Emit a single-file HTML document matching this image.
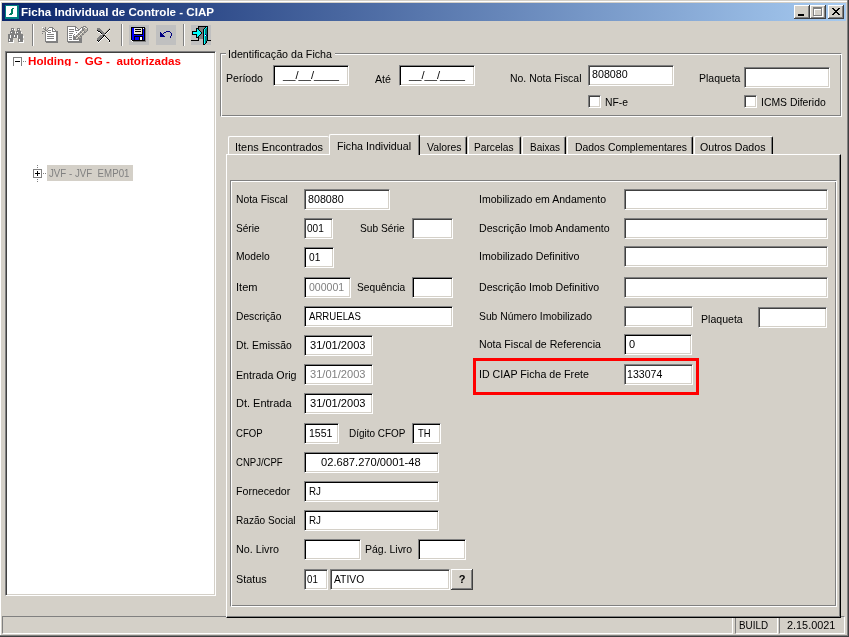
<!DOCTYPE html>
<html><head><meta charset="utf-8">
<style>
*{box-sizing:border-box;margin:0;padding:0}
html,body{width:849px;height:637px;overflow:hidden;background:#d4d0c8}
body{position:relative;font-family:"Liberation Sans",sans-serif;font-size:11px;color:#000;line-height:13px}
.a{position:absolute;white-space:pre}
.l{position:absolute;white-space:pre;height:13px;line-height:13px}
.l span,.inp span,.tab span,.sb span,.t span{display:inline-block;transform-origin:0 0;white-space:pre}
.inp{position:absolute;background:#fff;border:1px solid;border-color:#808080 #fff #fff #808080;box-shadow:inset 1px 1px #404040,inset -1px -1px #d4d0c8;height:21px;white-space:pre;line-height:13px;padding:3px 0 0 4px;overflow:hidden}
.dis{color:#808080}
.bk{box-shadow:inset 1px 1px #000,inset -1px -1px #d4d0c8}
.grp{position:absolute;border:1px solid;border-color:#808080 #fff #fff #808080;box-shadow:inset 1px 1px #fff,inset -1px -1px #808080}
.tab{position:absolute;top:136px;height:18px;border-top:1px solid #fff;border-left:1px solid #fff;border-right:1px solid #000;border-radius:2px 2px 0 0;box-shadow:inset -1px 0 #808080;padding:4px 0 0 6px;white-space:pre;line-height:13px}
.chk{position:absolute;width:13px;height:13px;background:#fff;border:1px solid;border-color:#808080 #fff #fff #808080;box-shadow:inset 1px 1px #404040,inset -1px -1px #d4d0c8}
.sb{position:absolute;top:616px;height:18px;border:1px solid;border-color:#808080 #fff #fff #808080;line-height:13px;padding:2px 0 0 4px;white-space:pre}
.cb{top:5px;width:16px;height:14px;background:#d4d0c8;box-shadow:inset -1px -1px #404040,inset 1px 1px #fff,inset -2px -2px #808080}
.cb svg{display:block}
#s1{transform:scaleX(1.0526)}
#s2{transform:scaleX(1.0563)}
#s3{transform:scaleX(0.8839)}
#s4{transform:scaleX(0.9718)}
#s5{transform:scaleX(0.9603)}
#s6{transform:scaleX(1.0170)}
#s7{transform:scaleX(0.9688)}
#s8{transform:scaleX(1.0170)}
#s9{transform:scaleX(0.9508)}
#s10{transform:scaleX(0.9723)}
#s11{transform:scaleX(0.9406)}
#s12{transform:scaleX(0.9531)}
#s13{transform:scaleX(0.9450)}
#s14{transform:scaleX(0.8949)}
#s15{transform:scaleX(0.9870)}
#s16{transform:scaleX(0.9924)}
#s17{transform:scaleX(0.9681)}
#s18{transform:scaleX(0.9456)}
#s19{transform:scaleX(0.9230)}
#s20{transform:scaleX(0.9082)}
#s21{transform:scaleX(0.9442)}
#s22{transform:scaleX(0.9650)}
#s23{transform:scaleX(0.9395)}
#s24{transform:scaleX(0.9723)}
#s25{transform:scaleX(0.9187)}
#s26{transform:scaleX(0.9151)}
#s27{transform:scaleX(0.9252)}
#s28{transform:scaleX(0.9341)}
#s29{transform:scaleX(0.9224)}
#s30{transform:scaleX(1.0044)}
#s31{transform:scaleX(0.9586)}
#s32{transform:scaleX(0.9269)}
#s33{transform:scaleX(0.9304)}
#s34{transform:scaleX(0.8736)}
#s35{transform:scaleX(0.9410)}
#s36{transform:scaleX(1.0079)}
#s37{transform:scaleX(0.9699)}
#s38{transform:scaleX(1.0079)}
#s39{transform:scaleX(0.9975)}
#s40{transform:scaleX(1.0079)}
#s41{transform:scaleX(0.8703)}
#s42{transform:scaleX(0.9598)}
#s43{transform:scaleX(0.9060)}
#s44{transform:scaleX(0.8588)}
#s45{transform:scaleX(0.8683)}
#s46{transform:scaleX(1.0123)}
#s47{transform:scaleX(0.9651)}
#s48{transform:scaleX(0.8920)}
#s49{transform:scaleX(0.9178)}
#s50{transform:scaleX(0.8920)}
#s51{transform:scaleX(0.9766)}
#s52{transform:scaleX(0.9529)}
#s53{transform:scaleX(0.9844)}
#s54{transform:scaleX(0.8816)}
#s55{transform:scaleX(0.9378)}
#s56{transform:scaleX(0.9579)}
#s57{transform:scaleX(0.9671)}
#s58{transform:scaleX(0.9669)}
#s59{transform:scaleX(0.9630)}
#s60{transform:scaleX(0.9381)}
#s61{transform:scaleX(0.9600)}
#s62{transform:scaleX(0.9632)}
#s64{transform:scaleX(0.9690)}
#s65{transform:scaleX(0.9614)}
</style></head><body>
<div id="w" style="position:absolute;left:0;top:0;width:849px;height:637px;will-change:transform">
<div class="a" style="left:0px;top:1px;width:848px;height:1px;background:#fff"></div>
<div class="a" style="left:0px;top:1px;width:1px;height:634px;background:#fff"></div>
<div class="a" style="left:847px;top:0px;width:1px;height:637px;background:#808080"></div>
<div class="a" style="left:848px;top:0px;width:1px;height:637px;background:#404040"></div>
<div class="a" style="left:0px;top:635px;width:848px;height:1px;background:#808080"></div>
<div class="a" style="left:0px;top:636px;width:849px;height:1px;background:#404040"></div>
<div class="a" style="left:2px;top:3px;width:844px;height:18px;background:linear-gradient(90deg,#0a246a,#a6caf0)"></div>
<div class="a t" style="left:21.4px;top:5px;color:#fff;font-weight:bold;line-height:14px"><span id="s1">Ficha Individual de Controle - CIAP</span></div>
<svg class="a" style="left:5px;top:5px" width="14" height="14" viewBox="0 0 14 14" shape-rendering="crispEdges"><rect width="14" height="14" fill="#008080"/><rect x="1" y="1" width="11" height="11" fill="#fff"/><path d="M7 3h2v1h-1v5h-1v1h-3v-1h1v-1h1v-4h1z" fill="#008060"/></svg>
<div class="a cb" style="left:794px"><svg width="16" height="14" viewBox="0 0 16 14" shape-rendering="crispEdges"><rect x="4" y="9" width="6" height="2" fill="#000"/></svg></div>
<div class="a cb" style="left:810px"><svg width="16" height="14" viewBox="0 0 16 14" shape-rendering="crispEdges"><path d="M4 3h9v9h-9z M5 5v6h7v-6z" fill="#fff" fill-rule="evenodd"/><path d="M3 2h9v9h-9z M4 4v6h7v-6z" fill="#808080" fill-rule="evenodd"/></svg></div>
<div class="a cb" style="left:828px"><svg width="16" height="14" viewBox="0 0 16 14" shape-rendering="crispEdges"><path d="M4 3h2v1h1v1h2v-1h1v-1h2v1h-1v1h-1v1h-1v1h1v1h1v1h1v1h-2v-1h-1v-1h-2v1h-1v1h-2v-1h1v-1h1v-1h1v-1h-1v-1h-1v-1h-1z" fill="#000"/></svg></div>

<svg class="a" style="left:8px;top:28px" width="16" height="15" viewBox="0 0 16 15" shape-rendering="crispEdges"><path fill="#808080" d="M3 0h3v1h-3zM9 0h3v1h-3zM3 1h1v1h-1zM5 1h1v1h-1zM9 1h1v1h-1zM11 1h1v1h-1zM3 2h3v1h-3zM9 2h3v1h-3zM2 3h5v1h-5zM8 3h5v1h-5zM2 4h1v1h-1zM4 4h3v1h-3zM8 4h1v1h-1zM10 4h3v1h-3zM2 5h5v1h-5zM8 5h5v1h-5zM0 6h15v1h-15zM0 7h2v1h-2zM3 7h3v1h-3zM7 7h2v1h-2zM10 7h5v1h-5zM0 8h2v1h-2zM3 8h3v1h-3zM7 8h2v1h-2zM10 8h5v1h-5zM0 9h2v1h-2zM3 9h6v1h-6zM10 9h5v1h-5zM0 10h5v1h-5zM10 10h5v1h-5zM0 11h1v1h-1zM2 11h3v1h-3zM10 11h1v1h-1zM12 11h3v1h-3zM0 12h1v1h-1zM2 12h3v1h-3zM10 12h1v1h-1zM12 12h3v1h-3zM0 13h5v1h-5zM10 13h5v1h-5z"/><path fill="#ffffff" d="M4 1h1v1h-1zM6 1h1v1h-1zM10 1h1v1h-1zM12 1h1v1h-1zM3 4h1v1h-1zM7 4h1v1h-1zM9 4h1v1h-1zM13 4h1v1h-1zM2 7h1v1h-1zM6 7h1v1h-1zM9 7h1v1h-1zM2 8h1v1h-1zM6 8h1v1h-1zM9 8h1v1h-1zM15 8h1v1h-1zM2 9h1v1h-1zM9 9h1v1h-1zM15 9h1v1h-1zM1 11h1v1h-1zM11 11h1v1h-1zM1 12h1v1h-1zM5 12h1v1h-1zM11 12h1v1h-1zM15 12h1v1h-1zM5 13h1v1h-1zM15 13h1v1h-1zM1 14h5v1h-5zM11 14h5v1h-5z"/></svg>
<div class="a" style="left:32px;top:24px;width:1px;height:22px;background:#808080"></div><div class="a" style="left:33px;top:24px;width:1px;height:22px;background:#fff"></div>
<svg class="a" style="left:42px;top:27px" width="16" height="16" viewBox="0 0 16 16" shape-rendering="crispEdges"><path fill="#ffffff" d="M0 0h1v1h-1zM7 1h3v1h-3zM6 2h4v1h-4zM11 2h1v1h-1zM9 3h1v1h-1zM11 3h2v1h-2zM6 4h4v1h-4zM4 5h2v1h-2zM9 5h5v1h-5zM4 6h10v1h-10zM4 7h1v1h-1zM12 7h2v1h-2zM4 8h10v1h-10zM4 9h1v1h-1zM12 9h2v1h-2zM4 10h10v1h-10zM4 11h1v1h-1zM12 11h2v1h-2zM4 12h10v1h-10zM4 13h10v1h-10z"/><path fill="#808080" d="M3 0h1v1h-1zM7 0h4v1h-4zM1 1h1v1h-1zM3 1h1v1h-1zM6 1h1v1h-1zM10 1h2v1h-2zM2 2h2v1h-2zM5 2h1v1h-1zM10 2h1v1h-1zM12 2h1v1h-1zM3 3h2v1h-2zM6 3h3v1h-3zM10 3h1v1h-1zM13 3h1v1h-1zM0 4h3v1h-3zM5 4h1v1h-1zM10 4h6v1h-6zM3 5h1v1h-1zM6 5h3v1h-3zM14 5h2v1h-2zM0 6h1v1h-1zM3 6h1v1h-1zM14 6h2v1h-2zM3 7h1v1h-1zM5 7h7v1h-7zM14 7h2v1h-2zM3 8h1v1h-1zM14 8h2v1h-2zM3 9h1v1h-1zM5 9h7v1h-7zM14 9h2v1h-2zM3 10h1v1h-1zM14 10h2v1h-2zM3 11h1v1h-1zM5 11h7v1h-7zM14 11h2v1h-2zM3 12h1v1h-1zM14 12h2v1h-2zM3 13h1v1h-1zM14 13h2v1h-2zM3 14h13v1h-13zM4 15h12v1h-12z"/></svg>
<svg class="a" style="left:67px;top:26px" width="21" height="17" viewBox="0 0 21 17" shape-rendering="crispEdges"><path fill="#808080" d="M0 0h9v1h-9zM16 0h3v1h-3zM0 1h1v1h-1zM8 1h2v1h-2zM14 1h2v1h-2zM19 1h1v1h-1zM0 2h1v1h-1zM8 2h1v1h-1zM10 2h1v1h-1zM13 2h1v1h-1zM15 2h1v1h-1zM17 2h1v1h-1zM20 2h1v1h-1zM0 3h1v1h-1zM2 3h5v1h-5zM8 3h1v1h-1zM11 3h2v1h-2zM15 3h2v1h-2zM20 3h1v1h-1zM0 4h1v1h-1zM8 4h4v1h-4zM15 4h2v1h-2zM20 4h1v1h-1zM0 5h1v1h-1zM2 5h5v1h-5zM13 5h1v1h-1zM17 5h1v1h-1zM19 5h1v1h-1zM0 6h1v1h-1zM9 6h1v1h-1zM13 6h2v1h-2zM17 6h2v1h-2zM0 7h1v1h-1zM2 7h4v1h-4zM11 7h1v1h-1zM15 7h1v1h-1zM0 8h1v1h-1zM7 8h1v1h-1zM11 8h2v1h-2zM15 8h2v1h-2zM0 9h1v1h-1zM2 9h3v1h-3zM6 9h1v1h-1zM9 9h1v1h-1zM13 9h1v1h-1zM0 10h1v1h-1zM6 10h2v1h-2zM9 10h2v1h-2zM13 10h2v1h-2zM0 11h1v1h-1zM2 11h3v1h-3zM6 11h3v1h-3zM11 11h1v1h-1zM14 11h1v1h-1zM0 12h1v1h-1zM6 12h3v1h-3zM11 12h4v1h-4zM0 13h1v1h-1zM2 13h3v1h-3zM6 13h5v1h-5zM12 13h3v1h-3zM0 14h1v1h-1zM12 14h3v1h-3zM0 15h15v1h-15zM1 16h14v1h-14z"/><path fill="#ffffff" d="M1 1h7v1h-7zM17 1h1v1h-1zM1 2h7v1h-7zM9 2h1v1h-1zM14 2h1v1h-1zM1 3h1v1h-1zM7 3h1v1h-1zM9 3h2v1h-2zM13 3h2v1h-2zM1 4h7v1h-7zM12 4h2v1h-2zM1 5h1v1h-1zM7 5h6v1h-6zM1 6h8v1h-8zM10 6h2v1h-2zM1 7h1v1h-1zM6 7h5v1h-5zM1 8h6v1h-6zM8 8h2v1h-2zM1 9h1v1h-1zM5 9h1v1h-1zM7 9h2v1h-2zM1 10h5v1h-5zM1 11h1v1h-1zM5 11h1v1h-1zM1 12h5v1h-5zM1 13h1v1h-1zM5 13h1v1h-1zM1 14h11v1h-11z"/><path fill="#b0aca4" d="M16 1h1v1h-1zM18 1h1v1h-1zM16 2h1v1h-1zM17 3h3v1h-3zM14 4h1v1h-1zM17 4h3v1h-3zM14 5h2v1h-2zM18 5h1v1h-1zM12 6h1v1h-1zM16 6h1v1h-1zM12 7h2v1h-2zM16 7h2v1h-2zM10 8h1v1h-1zM14 8h1v1h-1zM10 9h2v1h-2zM14 9h2v1h-2zM8 10h1v1h-1zM12 10h1v1h-1zM9 11h1v1h-1zM12 11h2v1h-2zM10 12h1v1h-1zM11 13h1v1h-1z"/><path fill="#e8e4d8" d="M18 2h2v1h-2zM16 5h1v1h-1zM15 6h1v1h-1zM14 7h1v1h-1zM13 8h1v1h-1zM12 9h1v1h-1zM11 10h1v1h-1zM10 11h1v1h-1zM9 12h1v1h-1z"/></svg>
<svg class="a" style="left:96px;top:27px" width="16" height="17" viewBox="0 0 16 17" shape-rendering="crispEdges"><path fill="#808080" d="M1 1h3v1h-3zM1 2h4v1h-4zM2 3h4v1h-4zM4 4h3v1h-3zM5 5h3v1h-3zM6 6h3v1h-3zM6 7h3v1h-3zM4 8h3v1h-3zM3 9h4v1h-4zM2 10h4v1h-4zM1 11h4v1h-4zM1 12h3v1h-3zM2 13h1v1h-1z"/><path fill="#b0aca4" d="M13 1h1v1h-1zM12 2h1v1h-1zM11 3h1v1h-1zM10 4h1v1h-1zM9 5h1v1h-1zM9 8h1v1h-1z"/><path fill="#000000" d="M13 2h1v1h-1zM1 3h1v1h-1zM12 3h1v1h-1zM2 4h2v1h-2zM11 4h1v1h-1zM4 5h1v1h-1zM10 5h1v1h-1zM5 6h1v1h-1zM9 6h1v1h-1zM7 8h2v1h-2zM7 9h1v1h-1zM9 9h1v1h-1zM6 10h1v1h-1zM10 10h1v1h-1zM5 11h1v1h-1zM11 11h1v1h-1zM4 12h1v1h-1zM12 12h1v1h-1zM1 13h1v1h-1zM3 13h1v1h-1zM13 13h1v1h-1zM2 14h1v1h-1zM13 14h1v1h-1z"/><path fill="#ffffff" d="M13 3h1v1h-1zM1 4h1v1h-1zM12 4h1v1h-1zM2 5h2v1h-2zM11 5h1v1h-1zM4 6h1v1h-1zM10 6h1v1h-1zM5 7h1v1h-1zM9 7h1v1h-1zM8 9h1v1h-1zM7 10h1v1h-1zM9 10h1v1h-1zM6 11h1v1h-1zM10 11h1v1h-1zM5 12h1v1h-1zM11 12h1v1h-1zM4 13h1v1h-1zM12 13h1v1h-1zM1 14h1v1h-1zM3 14h1v1h-1zM2 15h1v1h-1zM13 15h1v1h-1z"/></svg>
<div class="a" style="left:121px;top:24px;width:1px;height:22px;background:#808080"></div><div class="a" style="left:122px;top:24px;width:1px;height:22px;background:#fff"></div>
<svg class="a" style="left:129px;top:25px" width="20" height="20" viewBox="0 0 20 20" shape-rendering="crispEdges"><path fill="#c0c0c0" d="M0 0h20v1h-20zM0 1h20v1h-20zM0 2h2v1h-2zM16 2h4v1h-4zM0 3h2v1h-2zM17 3h3v1h-3zM0 4h2v1h-2zM17 4h3v1h-3zM0 5h2v1h-2zM17 5h3v1h-3zM0 6h2v1h-2zM17 6h3v1h-3zM0 7h2v1h-2zM17 7h3v1h-3zM0 8h2v1h-2zM17 8h3v1h-3zM0 9h2v1h-2zM17 9h3v1h-3zM0 10h2v1h-2zM17 10h3v1h-3zM0 11h2v1h-2zM17 11h3v1h-3zM0 12h2v1h-2zM17 12h3v1h-3zM0 13h2v1h-2zM17 13h3v1h-3zM0 14h2v1h-2zM17 14h3v1h-3zM0 15h2v1h-2zM17 15h3v1h-3zM0 16h3v1h-3zM17 16h3v1h-3zM0 17h20v1h-20zM0 18h20v1h-20zM0 19h20v1h-20z"/><path fill="#000000" d="M2 2h14v1h-14zM2 3h1v1h-1zM13 3h1v1h-1zM15 3h1v1h-1zM2 4h1v1h-1zM6 4h6v1h-6zM13 4h1v1h-1zM15 4h1v1h-1zM2 5h1v1h-1zM13 5h1v1h-1zM15 5h1v1h-1zM2 6h1v1h-1zM6 6h6v1h-6zM13 6h1v1h-1zM15 6h1v1h-1zM2 7h1v1h-1zM13 7h1v1h-1zM15 7h1v1h-1zM2 8h1v1h-1zM13 8h1v1h-1zM15 8h1v1h-1zM2 9h1v1h-1zM5 9h9v1h-9zM15 9h1v1h-1zM2 10h1v1h-1zM15 10h1v1h-1zM2 11h1v1h-1zM5 11h9v1h-9zM15 11h1v1h-1zM2 12h1v1h-1zM5 12h1v1h-1zM10 12h1v1h-1zM13 12h1v1h-1zM15 12h1v1h-1zM2 13h1v1h-1zM5 13h1v1h-1zM10 13h1v1h-1zM13 13h1v1h-1zM15 13h1v1h-1zM2 14h1v1h-1zM5 14h1v1h-1zM10 14h1v1h-1zM13 14h1v1h-1zM15 14h1v1h-1zM3 15h13v1h-13z"/><path fill="#0000ff" d="M3 3h2v1h-2zM3 4h2v1h-2zM14 4h1v1h-1zM3 5h2v1h-2zM14 5h1v1h-1zM3 6h2v1h-2zM14 6h1v1h-1zM3 7h2v1h-2zM14 7h1v1h-1zM3 8h2v1h-2zM14 8h1v1h-1zM3 9h2v1h-2zM14 9h1v1h-1zM3 10h12v1h-12zM3 11h2v1h-2zM14 11h1v1h-1zM3 12h2v1h-2zM6 12h4v1h-4zM14 12h1v1h-1zM3 13h2v1h-2zM6 13h4v1h-4zM14 13h1v1h-1zM3 14h2v1h-2zM6 14h4v1h-4zM14 14h1v1h-1z"/><path fill="#e8e4d8" d="M5 3h8v1h-8zM5 4h1v1h-1zM12 4h1v1h-1zM5 5h8v1h-8zM5 6h1v1h-1zM12 6h1v1h-1zM5 7h8v1h-8zM5 8h8v1h-8z"/><path fill="#ffffff" d="M14 3h1v1h-1zM11 12h2v1h-2zM11 13h2v1h-2zM11 14h2v1h-2zM2 15h1v1h-1zM3 16h1v1h-1z"/><path fill="#808080" d="M16 3h1v1h-1zM16 4h1v1h-1zM16 5h1v1h-1zM16 6h1v1h-1zM16 7h1v1h-1zM16 8h1v1h-1zM16 9h1v1h-1zM16 10h1v1h-1zM16 11h1v1h-1zM16 12h1v1h-1zM16 13h1v1h-1zM16 14h1v1h-1zM16 15h1v1h-1zM4 16h13v1h-13z"/></svg>
<svg class="a" style="left:156px;top:25px" width="20" height="20" viewBox="0 0 20 20" shape-rendering="crispEdges"><path fill="#c0c0c0" d="M0 0h20v1h-20zM0 1h20v1h-20zM0 2h20v1h-20zM0 3h20v1h-20zM0 4h20v1h-20zM0 5h20v1h-20zM0 6h10v1h-10zM14 6h6v1h-6zM0 7h4v1h-4zM5 7h3v1h-3zM10 7h4v1h-4zM15 7h5v1h-5zM0 8h4v1h-4zM6 8h1v1h-1zM8 8h7v1h-7zM16 8h4v1h-4zM0 9h4v1h-4zM7 9h8v1h-8zM16 9h4v1h-4zM0 10h4v1h-4zM8 10h7v1h-7zM16 10h4v1h-4zM0 11h4v1h-4zM9 11h5v1h-5zM15 11h5v1h-5zM0 12h14v1h-14zM15 12h5v1h-5zM0 13h20v1h-20zM0 14h20v1h-20zM0 15h20v1h-20zM0 16h20v1h-20zM0 17h20v1h-20zM0 18h20v1h-20zM0 19h20v1h-20z"/><path fill="#000080" d="M10 6h4v1h-4zM4 7h1v1h-1zM8 7h2v1h-2zM14 7h1v1h-1zM4 8h2v1h-2zM7 8h1v1h-1zM15 8h1v1h-1zM4 9h3v1h-3zM15 9h1v1h-1zM4 10h4v1h-4zM15 10h1v1h-1zM4 11h5v1h-5zM14 11h1v1h-1zM14 12h1v1h-1z"/></svg>
<div class="a" style="left:183px;top:24px;width:1px;height:22px;background:#808080"></div><div class="a" style="left:184px;top:24px;width:1px;height:22px;background:#fff"></div>
<svg class="a" style="left:191px;top:25px" width="20" height="20" viewBox="0 0 20 20" shape-rendering="crispEdges"><path fill="#c0c0c0" d="M0 0h20v1h-20zM0 1h7v1h-7zM17 1h3v1h-3zM0 2h7v1h-7zM17 2h3v1h-3zM0 3h5v1h-5zM17 3h3v1h-3zM0 4h5v1h-5zM17 4h3v1h-3zM0 5h5v1h-5zM17 5h3v1h-3zM0 6h1v1h-1zM17 6h3v1h-3zM0 7h1v1h-1zM17 7h3v1h-3zM0 8h1v1h-1zM17 8h3v1h-3zM0 9h1v1h-1zM17 9h3v1h-3zM0 10h5v1h-5zM17 10h3v1h-3zM0 11h5v1h-5zM17 11h3v1h-3zM0 12h5v1h-5zM17 12h3v1h-3zM0 13h7v1h-7zM17 13h3v1h-3zM0 14h7v1h-7zM8 14h4v1h-4zM17 14h3v1h-3zM8 15h4v1h-4zM0 16h12v1h-12zM16 16h4v1h-4zM0 17h12v1h-12zM16 17h4v1h-4zM0 18h12v1h-12zM15 18h5v1h-5zM0 19h12v1h-12zM14 19h6v1h-6z"/><path fill="#000000" d="M7 1h10v1h-10zM7 2h1v1h-1zM14 2h1v1h-1zM16 2h1v1h-1zM5 3h3v1h-3zM13 3h1v1h-1zM16 3h1v1h-1zM5 4h1v1h-1zM7 4h1v1h-1zM12 4h1v1h-1zM16 4h1v1h-1zM5 5h1v1h-1zM8 5h1v1h-1zM12 5h1v1h-1zM16 5h1v1h-1zM1 6h5v1h-5zM9 6h1v1h-1zM12 6h1v1h-1zM16 6h1v1h-1zM1 7h1v1h-1zM10 7h1v1h-1zM12 7h1v1h-1zM16 7h1v1h-1zM1 8h1v1h-1zM10 8h1v1h-1zM12 8h1v1h-1zM16 8h1v1h-1zM1 9h5v1h-5zM9 9h1v1h-1zM12 9h1v1h-1zM16 9h1v1h-1zM5 10h1v1h-1zM8 10h1v1h-1zM12 10h1v1h-1zM16 10h1v1h-1zM5 11h1v1h-1zM7 11h1v1h-1zM12 11h1v1h-1zM16 11h1v1h-1zM5 12h3v1h-3zM12 12h1v1h-1zM16 12h1v1h-1zM7 13h1v1h-1zM12 13h1v1h-1zM16 13h1v1h-1zM7 14h1v1h-1zM12 14h1v1h-1zM16 14h1v1h-1zM0 15h8v1h-8zM12 15h1v1h-1zM16 15h4v1h-4zM12 16h1v1h-1zM15 16h1v1h-1zM12 17h1v1h-1zM15 17h1v1h-1zM12 18h1v1h-1zM14 18h1v1h-1zM12 19h2v1h-2z"/><path fill="#808080" d="M8 2h6v1h-6zM8 3h5v1h-5zM8 4h4v1h-4zM9 5h3v1h-3zM10 6h2v1h-2zM11 7h1v1h-1zM11 8h1v1h-1zM10 9h2v1h-2zM9 10h3v1h-3zM8 11h4v1h-4zM8 12h4v1h-4zM8 13h4v1h-4z"/><path fill="#00ffff" d="M15 2h1v1h-1zM14 3h1v1h-1zM6 4h1v1h-1zM13 4h1v1h-1zM6 5h2v1h-2zM13 5h1v1h-1zM6 6h3v1h-3zM13 6h1v1h-1zM2 7h8v1h-8zM13 7h1v1h-1zM2 8h8v1h-8zM13 8h1v1h-1zM6 9h3v1h-3zM13 9h1v1h-1zM6 10h2v1h-2zM13 10h1v1h-1zM6 11h1v1h-1zM13 11h1v1h-1zM13 12h1v1h-1zM13 13h1v1h-1zM13 14h1v1h-1zM13 15h1v1h-1zM13 16h1v1h-1zM13 17h1v1h-1zM13 18h1v1h-1z"/><path fill="#008080" d="M15 3h1v1h-1zM14 4h2v1h-2zM14 5h2v1h-2zM14 6h2v1h-2zM14 7h2v1h-2zM14 8h2v1h-2zM15 9h1v1h-1zM14 11h2v1h-2zM14 12h2v1h-2zM14 13h2v1h-2zM14 14h2v1h-2zM14 15h2v1h-2zM14 16h1v1h-1zM14 17h1v1h-1z"/><path fill="#000080" d="M14 9h1v1h-1zM15 10h1v1h-1z"/><path fill="#ffffff" d="M14 10h1v1h-1z"/></svg>

<div class="a" style="left:5px;top:51px;width:211px;height:545px;background:#fff;border:1px solid;border-color:#808080 #fff #fff #808080;box-shadow:inset 1px 1px #404040,inset -1px -1px #d4d0c8"></div>
<div class="a" style="left:13px;top:57px;width:9px;height:9px;border:1px solid #808080;border-bottom:none"></div>
<div class="a" style="left:15px;top:61px;width:5px;height:1px;background:#000"></div>
<div class="a" style="left:23px;top:61px;width:1px;height:1px;background:#808080"></div>
<div class="a" style="left:25px;top:61px;width:1px;height:1px;background:#808080"></div>
<div class="a t" style="left:27.8px;top:54px;height:12px;width:170px;overflow:hidden;color:#ff0000;font-weight:bold;line-height:14px"><span id="s2">Holding -  GG -  autorizadas</span></div>
<div class="a" style="left:47px;top:165px;width:86px;height:16px;background:#d4d0c8"></div>
<div class="a t" style="left:49px;top:166px;color:#808080;line-height:14px"><span id="s3">JVF - JVF  EMP01</span></div>
<div class="a" style="left:33px;top:169px;width:9px;height:9px;border:1px solid #808080;background:#fff"></div>
<div class="a" style="left:35px;top:173px;width:5px;height:1px;background:#000"></div>
<div class="a" style="left:37px;top:171px;width:1px;height:5px;background:#000"></div>
<div class="a" style="left:37px;top:165px;width:1px;height:1px;background:#808080"></div>
<div class="a" style="left:37px;top:167px;width:1px;height:1px;background:#808080"></div>
<div class="a" style="left:37px;top:179px;width:1px;height:1px;background:#808080"></div>
<div class="a" style="left:37px;top:181px;width:1px;height:1px;background:#808080"></div>
<div class="a" style="left:43px;top:173px;width:1px;height:1px;background:#808080"></div>
<div class="a" style="left:45px;top:173px;width:1px;height:1px;background:#808080"></div>
<div class="grp" style="left:220px;top:53px;width:622px;height:64px"></div>
<div class="l" style="left:226px;top:48px;background:#d4d0c8;padding:0 2px;width:109px"><span id="s4">Identificação da Ficha</span></div>
<div class="l" style="left:226px;top:72px;"><span id="s5">Período</span></div>
<div class="inp bk" style="left:273px;top:65px;width:76px;padding-left:9px;"><span id="s6">__/__/____</span></div>
<div class="l" style="left:375px;top:73px;"><span id="s7">Até</span></div>
<div class="inp bk" style="left:399px;top:65px;width:76px;padding-left:9px;"><span id="s8">__/__/____</span></div>
<div class="l" style="left:510px;top:72px;"><span id="s9">No. Nota Fiscal</span></div>
<div class="inp " style="left:588px;top:65px;width:86px;padding-left:2.5px;padding-top:2px;"><span id="s10">808080</span></div>
<div class="chk" style="left:588px;top:95px"></div>
<div class="l" style="left:605px;top:96px;"><span id="s11">NF-e</span></div>
<div class="l" style="left:699px;top:72px;"><span id="s12">Plaqueta</span></div>
<div class="inp " style="left:744px;top:67px;width:86px;"></div>
<div class="chk" style="left:744px;top:95px"></div>
<div class="l" style="left:761px;top:96px;"><span id="s13">ICMS Diferido</span></div>
<div class="sb" style="left:2px;width:731px"></div>
<div class="sb" style="left:735px;width:43px;padding-left:3px"><span id="s14">BUILD</span></div>
<div class="sb" style="left:779px;width:66px;padding-left:7px"><span id="s15">2.15.0021</span></div>
<div class="a" style="left:226px;top:154px;width:615px;height:464px;background:#d4d0c8;border:1px solid;border-color:#fff #000 #000 #fff;box-shadow:inset -1px -1px #808080"></div>
<div class="tab" style="left:228px;width:101px;padding-left:6px;border-right:none;box-shadow:none;"><span id="s16">Itens Encontrados</span></div>
<div class="tab" style="left:329px;width:91px;padding-left:7px;top:134px;height:21px;background:#d4d0c8;padding-top:5px;"><span id="s17">Ficha Individual</span></div>
<div class="tab" style="left:420px;width:47px;padding-left:7px;border-left:none;border-radius:0 2px 0 0;"><span id="s18">Valores</span></div>
<div class="tab" style="left:468px;width:53px;padding-left:5px;"><span id="s19">Parcelas</span></div>
<div class="tab" style="left:522px;width:44px;padding-left:7px;"><span id="s20">Baixas</span></div>
<div class="tab" style="left:567px;width:126px;padding-left:7px;"><span id="s21">Dados Complementares</span></div>
<div class="tab" style="left:694px;width:79px;padding-left:5px;"><span id="s22">Outros Dados</span></div>
<div class="grp" style="left:230px;top:180px;width:607px;height:427px"></div>
<div class="l" style="left:236px;top:193px;"><span id="s23">Nota Fiscal</span></div>
<div class="inp " style="left:304px;top:189px;width:86px;padding-left:2.5px;"><span id="s24">808080</span></div>
<div class="l" style="left:236px;top:222px;"><span id="s25">Série</span></div>
<div class="inp " style="left:304px;top:218px;width:29px;padding-left:2px;"><span id="s26">001</span></div>
<div class="l" style="left:360px;top:222px;"><span id="s27">Sub Série</span></div>
<div class="inp " style="left:412px;top:218px;width:41px;"></div>
<div class="l" style="left:236px;top:250px;"><span id="s28">Modelo</span></div>
<div class="inp bk" style="left:304px;top:247px;width:30px;padding-left:3.5px;"><span id="s29">01</span></div>
<div class="l" style="left:236px;top:281px;"><span id="s30">Item</span></div>
<div class="inp dis bk" style="left:304px;top:277px;width:47px;padding-left:4px;"><span id="s31">000001</span></div>
<div class="l" style="left:357px;top:281px;"><span id="s32">Sequência</span></div>
<div class="inp bk" style="left:412px;top:277px;width:41px;"></div>
<div class="l" style="left:236px;top:310px;"><span id="s33">Descrição</span></div>
<div class="inp bk" style="left:304px;top:306px;width:149px;padding-left:4px;"><span id="s34">ARRUELAS</span></div>
<div class="l" style="left:236px;top:339px;"><span id="s35">Dt. Emissão</span></div>
<div class="inp bk" style="left:304px;top:335px;width:69px;padding-left:5px;"><span id="s36">31/01/2003</span></div>
<div class="l" style="left:236px;top:369px;"><span id="s37">Entrada Orig</span></div>
<div class="inp dis bk" style="left:304px;top:364px;width:69px;padding-left:5px;"><span id="s38">31/01/2003</span></div>
<div class="l" style="left:236px;top:397px;"><span id="s39">Dt. Entrada</span></div>
<div class="inp bk" style="left:304px;top:393px;width:69px;padding-left:5px;"><span id="s40">31/01/2003</span></div>
<div class="l" style="left:236px;top:427px;"><span id="s41">CFOP</span></div>
<div class="inp bk" style="left:304px;top:423px;width:35px;padding-left:4px;"><span id="s42">1551</span></div>
<div class="l" style="left:349px;top:427px;"><span id="s43">Dígito CFOP</span></div>
<div class="inp bk" style="left:412px;top:423px;width:29px;padding-left:5px;"><span id="s44">TH</span></div>
<div class="l" style="left:236px;top:456px;"><span id="s45">CNPJ/CPF</span></div>
<div class="inp bk" style="left:304px;top:452px;width:135px;padding-left:16px;"><span id="s46">02.687.270/0001-48</span></div>
<div class="l" style="left:236px;top:485px;"><span id="s47">Fornecedor</span></div>
<div class="inp bk" style="left:304px;top:481px;width:135px;padding-left:4px;"><span id="s48">RJ</span></div>
<div class="l" style="left:236px;top:514px;"><span id="s49">Razão Social</span></div>
<div class="inp bk" style="left:304px;top:510px;width:135px;padding-left:4px;"><span id="s50">RJ</span></div>
<div class="l" style="left:236px;top:543px;"><span id="s51">No. Livro</span></div>
<div class="inp bk" style="left:304px;top:539px;width:57px;"></div>
<div class="l" style="left:365px;top:543px;"><span id="s52">Pág. Livro</span></div>
<div class="inp bk" style="left:418px;top:539px;width:48px;"></div>
<div class="l" style="left:236px;top:573px;"><span id="s53">Status</span></div>
<div class="inp " style="left:304px;top:569px;width:24px;padding-left:2px;"><span id="s54">01</span></div>
<div class="inp " style="left:330px;top:569px;width:120px;padding-left:3px;"><span id="s55">ATIVO</span></div>
<div class="a" style="left:451px;top:569px;width:22px;height:21px;background:#d4d0c8;box-shadow:inset -1px -1px #404040,inset 1px 1px #fff,inset -2px -2px #808080;font-weight:bold;text-align:center;line-height:13px;padding-top:4px">?</div>
<div class="l" style="left:479px;top:193px;"><span id="s56">Imobilizado em Andamento</span></div>
<div class="inp " style="left:624px;top:189px;width:204px;"></div>
<div class="l" style="left:479px;top:222px;"><span id="s57">Descrição Imob Andamento</span></div>
<div class="inp " style="left:624px;top:218px;width:204px;"></div>
<div class="l" style="left:479px;top:250px;"><span id="s58">Imobilizado Definitivo</span></div>
<div class="inp " style="left:624px;top:246px;width:204px;"></div>
<div class="l" style="left:479px;top:281px;"><span id="s59">Descrição Imob Definitivo</span></div>
<div class="inp " style="left:624px;top:277px;width:204px;"></div>
<div class="l" style="left:479px;top:310px;"><span id="s60">Sub Número Imobilizado</span></div>
<div class="inp " style="left:624px;top:306px;width:69px;"></div>
<div class="l" style="left:701px;top:313px;"><span id="s61">Plaqueta</span></div>
<div class="inp " style="left:758px;top:307px;width:69px;"></div>
<div class="l" style="left:479px;top:338px;"><span id="s62">Nota Fiscal de Referencia</span></div>
<div class="inp bk" style="left:624px;top:334px;width:68px;padding-left:4px;"><span id="s63">0</span></div>
<div class="l" style="left:479px;top:368px;"><span id="s64">ID CIAP Ficha de Frete</span></div>
<div class="inp " style="left:624px;top:364px;width:69px;padding-left:2px;"><span id="s65">133074</span></div>
<div class="a" style="left:473px;top:358px;width:226px;height:37px;border:3px solid #ff0000"></div>
</div>
</body></html>
